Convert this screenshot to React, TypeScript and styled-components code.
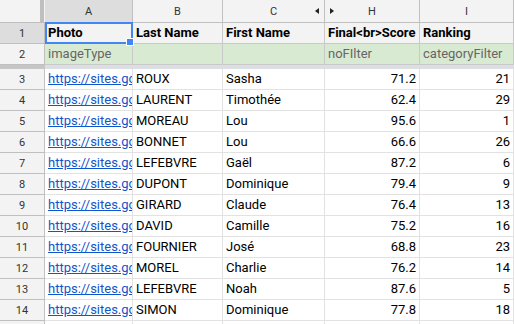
import React from 'react'
import styled, { createGlobalStyle } from 'styled-components'

const GlobalStyle = createGlobalStyle`
  html, body {
    margin: 0;
    padding: 0;
    background: #fff;
    overflow: hidden;
  }
  body {
    font-family: Roboto, "Liberation Sans", Arial, sans-serif;
  }
`

const COLS = [88, 90, 102, 95, 94]
const LETTERS = ['A', 'B', 'C', 'H', 'I']

const rows = [
  ['ROUX', 'Sasha', '71.2', '21'],
  ['LAURENT', 'Timothée', '62.4', '29'],
  ['MOREAU', 'Lou', '95.6', '1'],
  ['BONNET', 'Lou', '66.6', '26'],
  ['LEFEBVRE', 'Gaël', '87.2', '6'],
  ['DUPONT', 'Dominique', '79.4', '9'],
  ['GIRARD', 'Claude', '76.4', '13'],
  ['DAVID', 'Camille', '75.2', '16'],
  ['FOURNIER', 'José', '68.8', '23'],
  ['MOREL', 'Charlie', '76.2', '14'],
  ['LEFEBVRE', 'Noah', '87.6', '5'],
  ['SIMON', 'Dominique', '77.8', '18'],
]

const Sheet = styled.div`
  width: 514px;
  height: 324px;
  overflow: hidden;
  display: flex;
  flex-direction: column;
`

const Row = styled.div<{ $h?: number }>`
  display: flex;
  flex: none;
  height: ${(p) => p.$h ?? 21}px;
`

const Corner = styled.div`
  flex: none;
  width: 45px;
  box-sizing: border-box;
  background: #f3f3f3;
  border-bottom: 1px solid #c0c0c0;
  display: flex;
  justify-content: flex-end;
  padding-right: 1px;
`

const CornerBar = styled.div`
  width: 4px;
  background: #bfbfbf;
`

const ColHead = styled.div<{ $w: number; $active?: boolean }>`
  position: relative;
  flex: none;
  width: ${(p) => p.$w}px;
  box-sizing: border-box;
  background: ${(p) => (p.$active ? '#dddddd' : '#f3f3f3')};
  border-right: 1px solid #c0c0c0;
  border-bottom: 1px solid #c0c0c0;
  display: flex;
  align-items: center;
  justify-content: center;
  font-size: 11px;
  color: #333;
`

const Arrow = styled.span<{ $side: 'left' | 'right' }>`
  position: absolute;
  top: 8px;
  ${(p) => (p.$side === 'left' ? 'right: 5px;' : 'left: 5px;')}
  width: 0;
  height: 0;
  border-top: 3.5px solid transparent;
  border-bottom: 3.5px solid transparent;
  ${(p) =>
    p.$side === 'left'
      ? 'border-right: 4px solid #222;'
      : 'border-left: 4px solid #222;'}
`

const RowNum = styled.div<{ $active?: boolean }>`
  flex: none;
  width: 45px;
  box-sizing: border-box;
  background: ${(p) => (p.$active ? '#dddddd' : '#f3f3f3')};
  border-right: 1px solid #c0c0c0;
  border-bottom: 1px solid #c0c0c0;
  display: flex;
  align-items: center;
  justify-content: center;
  font-size: 11px;
  color: #333;
`

type Tone = 'head' | 'type' | 'data'

const Cell = styled.div<{ $w: number; $tone: Tone; $right?: boolean }>`
  position: relative;
  flex: none;
  width: ${(p) => p.$w}px;
  box-sizing: border-box;
  padding: 0 3px;
  border-right: 1px solid
    ${(p) => (p.$tone === 'data' ? '#e2e2e2' : '#c9c9c9')};
  border-bottom: 1px solid
    ${(p) => (p.$tone === 'data' ? '#e2e2e2' : '#c9c9c9')};
  background: ${(p) =>
    p.$tone === 'head' ? '#f3f3f3' : p.$tone === 'type' ? '#d9ead3' : '#fff'};
  color: ${(p) => (p.$tone === 'type' ? '#666' : '#000')};
  font-weight: ${(p) => (p.$tone === 'head' ? 700 : 400)};
  font-size: 13px;
  line-height: 20px;
  white-space: nowrap;
  overflow: hidden;
  text-align: ${(p) => (p.$right ? 'right' : 'left')};
`

const Selection = styled.div`
  position: absolute;
  left: 0;
  top: -1px;
  right: -1px;
  bottom: -1px;
  border: 2px solid #4285f4;
  pointer-events: none;
`

const Handle = styled.div`
  position: absolute;
  right: -3px;
  bottom: -4px;
  width: 6px;
  height: 6px;
  background: #4285f4;
  border: 1px solid #fff;
  box-sizing: content-box;
`

const Link = styled.a`
  color: #1155cc;
  text-decoration: underline;
`

const FreezeLeft = styled.div`
  flex: none;
  width: 45px;
  background: #c6c6c6;
`

const FreezeRest = styled.div`
  flex: 1;
  background: #dbdfe4;
`

const HeadCellA = styled(Cell)`
  overflow: visible;
  z-index: 2;
`

export default function App() {
  return (
    <>
      <GlobalStyle />
      <Sheet>
        <Row $h={23}>
          <Corner>
            <CornerBar />
          </Corner>
          {LETTERS.map((l, i) => (
            <ColHead key={l} $w={COLS[i]} $active={i === 0}>
              {l}
              {i === 2 && <Arrow $side="left" />}
              {i === 3 && <Arrow $side="right" />}
            </ColHead>
          ))}
        </Row>
        <Row>
          <RowNum $active>1</RowNum>
          <HeadCellA $w={COLS[0]} $tone="head">
            Photo
            <Selection>
              <Handle />
            </Selection>
          </HeadCellA>
          <Cell $w={COLS[1]} $tone="head">Last Name</Cell>
          <Cell $w={COLS[2]} $tone="head">First Name</Cell>
          <Cell $w={COLS[3]} $tone="head">Final&lt;br&gt;Score</Cell>
          <Cell $w={COLS[4]} $tone="head">Ranking</Cell>
        </Row>
        <Row>
          <RowNum>2</RowNum>
          <Cell $w={COLS[0]} $tone="type">imageType</Cell>
          <Cell $w={COLS[1]} $tone="type" />
          <Cell $w={COLS[2]} $tone="type" />
          <Cell $w={COLS[3]} $tone="type">noFIlter</Cell>
          <Cell $w={COLS[4]} $tone="type">categoryFilter</Cell>
        </Row>
        <Row $h={4}>
          <FreezeLeft />
          <FreezeRest />
        </Row>
        {rows.map((r, i) => (
          <Row key={i}>
            <RowNum>{i + 3}</RowNum>
            <Cell $w={COLS[0]} $tone="data">
              <Link href="#">https://sites.google.com/</Link>
            </Cell>
            <Cell $w={COLS[1]} $tone="data">{r[0]}</Cell>
            <Cell $w={COLS[2]} $tone="data">{r[1]}</Cell>
            <Cell $w={COLS[3]} $tone="data" $right>{r[2]}</Cell>
            <Cell $w={COLS[4]} $tone="data" $right>{r[3]}</Cell>
          </Row>
        ))}
        <Row>
          <RowNum>15</RowNum>
          <Cell $w={COLS[0]} $tone="data" />
          <Cell $w={COLS[1]} $tone="data" />
          <Cell $w={COLS[2]} $tone="data" />
          <Cell $w={COLS[3]} $tone="data" />
          <Cell $w={COLS[4]} $tone="data" />
        </Row>
      </Sheet>
    </>
  )
}
